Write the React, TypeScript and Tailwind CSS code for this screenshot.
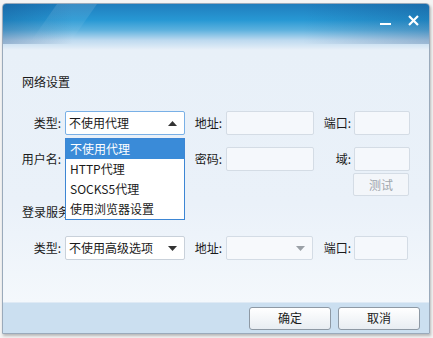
const font = { fontFamily: '"Microsoft YaHei", "Noto Sans CJK SC", "Noto Sans", sans-serif' };

function Field({ w, className = "" }: { w: string; className?: string }) {
  return <div className={`${w} h-[24px] rounded-[2px] border border-[#d4dce5] bg-[#f5f8fc] ${className}`} />;
}

function Label({ w, children }: { w: string; children: React.ReactNode }) {
  return <div className={`${w} shrink-0 text-right text-[12px] text-[#1a1a1a]`}>{children}</div>;
}

const items = ["不使用代理", "HTTP代理", "SOCKS5代理", "使用浏览器设置"];

export default function App() {
  return (
    <div className="w-[433px] h-[338px] bg-[#f4f4f4] pl-[2px] pt-[3px]" style={font}>
      <div className="w-[428px] h-[331px] flex flex-col rounded-t-[4px] border border-[#9aaabb] shadow-[1px_2px_3px_rgba(0,0,0,0.25)] overflow-hidden">
        {/* title + body */}
        <div className="relative flex-1 flex flex-col bg-[linear-gradient(180deg,#1f7dbd_0px,#2798d4_16px,#5db1de_26px,#bcd9ef_36px,#e8f0f8_46px,#eaf1f9_200px,#f4f8fc_298px)]">
          <div className="absolute inset-x-0 top-0 h-[40px] bg-[linear-gradient(90deg,rgba(10,60,120,0.28)_0px,rgba(10,60,120,0)_70px,rgba(10,60,120,0)_300px,rgba(10,60,120,0.25)_428px)]" />
          <div className="absolute left-[40px] top-0 h-[40px] w-[40px] -skew-x-[35deg] bg-[linear-gradient(180deg,rgba(255,255,255,0.12),rgba(255,255,255,0))]" />
          <div className="relative h-[34px] flex items-start justify-end pr-[10px] pt-[11px] gap-[17px]">
            <div className="w-[11px] h-[2px] bg-white mt-[8px]" />
            <svg width="11" height="11" viewBox="0 0 11 11">
              <path d="M1 1L10 10M10 1L1 10" stroke="white" strokeWidth="2.2" />
            </svg>
          </div>
          <div className="relative pl-[19px] pt-[36px] text-[12px] text-[#1a1a1a] leading-[16px]">网络设置</div>

          {/* row 1 */}
          <div className="relative flex items-center mt-[21px]">
            <Label w="w-[58px]">类型:</Label>
            <div className="relative ml-[4px] w-[120px] h-[24px]">
              <div className="h-full flex items-center justify-between rounded-[2px] border border-[#79b0e6] bg-white pl-[3px] pr-[7px] text-[12px] text-[#1a1a1a]">
                <span>不使用代理</span>
                <svg width="9" height="5" viewBox="0 0 9 5"><path d="M0 5L4.5 0L9 5Z" fill="#333" /></svg>
              </div>
              <div className="absolute left-0 top-[27px] z-10 w-[120px] border border-[#3d86d4] bg-white py-0 text-[12px] text-[#1a1a1a]">
                {items.map((t, i) => (
                  <div key={t} className={`h-[20px] leading-[20px] pl-[4px] ${i === 0 ? "bg-[#3a8bd8] text-white" : ""}`}>{t}</div>
                ))}
              </div>
            </div>
            <Label w="w-[37px]">地址:</Label>
            <Field w="w-[88px]" className="ml-[4px]" />
            <Label w="w-[37px]">端口:</Label>
            <Field w="w-[56px]" className="ml-[3px]" />
          </div>

          {/* row 2 */}
          <div className="relative flex items-center mt-[12px]">
            <Label w="w-[58px]">用户名:</Label>
            <div className="ml-[4px] w-[120px] h-[24px]" />
            <Label w="w-[37px]">密码:</Label>
            <Field w="w-[88px]" className="ml-[4px]" />
            <Label w="w-[37px]">域:</Label>
            <Field w="w-[56px]" className="ml-[3px]" />
          </div>

          {/* test */}
          <div className="relative flex mt-[2px] pl-[350px]">
            <div className="w-[56px] h-[23px] flex items-center justify-center rounded-[2px] border border-[#d4dce5] bg-[#f3f6fa] text-[12px] text-[#a0a6ad]">测试</div>
          </div>

          <div className="relative pl-[19px] mt-[8px] text-[12px] leading-[16px] text-[#1a1a1a]">登录服务器设置</div>

          {/* row 3 */}
          <div className="relative flex items-center mt-[16px]">
            <Label w="w-[58px]">类型:</Label>
            <div className="ml-[4px] w-[120px] h-[24px] flex items-center justify-between rounded-[2px] border border-[#c9d1da] bg-white pl-[3px] pr-[7px] text-[12px] text-[#1a1a1a]">
              <span>不使用高级选项</span>
              <svg width="9" height="5" viewBox="0 0 9 5"><path d="M0 0L9 0L4.5 5Z" fill="#333" /></svg>
            </div>
            <Label w="w-[37px]">地址:</Label>
            <div className="ml-[4px] w-[87px] h-[24px] flex items-center justify-end rounded-[2px] border border-[#d4dce5] bg-[#f7f9fc] pr-[7px]">
              <svg width="9" height="5" viewBox="0 0 9 5"><path d="M0 0L9 0L4.5 5Z" fill="#9aa0a6" /></svg>
            </div>
            <Label w="w-[38px]">端口:</Label>
            <Field w="w-[54px]" className="ml-[3px]" />
          </div>
        </div>

        {/* footer */}
        <div className="h-[31px] shrink-0 flex items-center justify-end gap-[7px] pr-[9px] bg-[#cbdff0] border-t border-[#dfeaf5]">
          {["确定", "取消"].map((t) => (
            <div key={t} className="w-[82px] h-[23px] flex items-center justify-center rounded-[3px] border border-[#8e99a4] bg-[linear-gradient(180deg,#ffffff,#e8edf2)] text-[12px] text-[#1a1a1a]">{t}</div>
          ))}
        </div>
      </div>
    </div>
  );
}
